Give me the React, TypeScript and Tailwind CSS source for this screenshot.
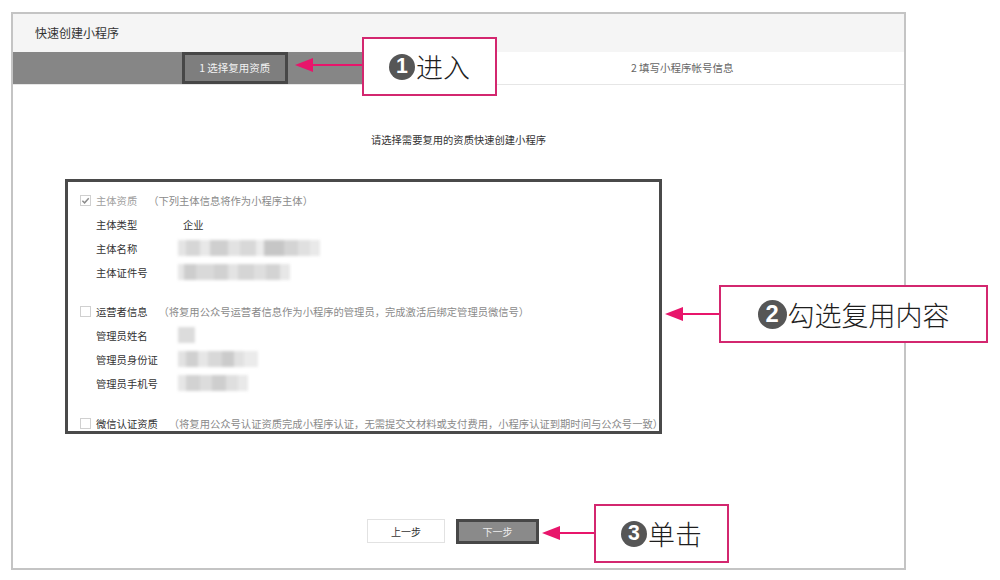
import React from 'react';

const FONT = { fontFamily: '"Noto Sans CJK SC", "Liberation Sans", sans-serif' };

type Cell = [number, string];

const nameBlur: Cell[] = [
  [8, '#e4e4e4'], [14, '#d6d6d6'], [10, '#e8e8e8'], [18, '#cfcfcf'], [12, '#e2e2e2'],
  [16, '#d8d8d8'], [8, '#ececec'], [20, '#c6c6c6'], [14, '#d4d4d4'], [12, '#e0e0e0'], [10, '#e9e9e9'],
];
const idBlur: Cell[] = [
  [6, '#e6e6e6'], [12, '#cdcdcd'], [18, '#d9d9d9'], [14, '#d1d1d1'], [10, '#e3e3e3'],
  [16, '#d5d5d5'], [12, '#dedede'], [14, '#d3d3d3'], [10, '#e7e7e7'],
];
const adminName: Cell[] = [[17, '#dcdcdc']];
const adminId: Cell[] = [
  [8, '#e2e2e2'], [12, '#d0d0d0'], [10, '#e6e6e6'], [14, '#d8d8d8'], [12, '#cbcbcb'], [10, '#e1e1e1'], [14, '#ebebeb'],
];
const adminPhone: Cell[] = [
  [8, '#e6e6e6'], [14, '#d2d2d2'], [12, '#dcdcdc'], [14, '#cecece'], [12, '#dfdfdf'], [10, '#e9e9e9'],
];

const Blur = ({ cells }: { cells: Cell[] }) => (
  <div className="flex h-[16px] blur-[1.5px]">
    {cells.map(([w, c], i) => (
      <div key={i} className="h-full" style={{ width: w, background: c }} />
    ))}
  </div>
);

const Checkbox = ({ checked }: { checked?: boolean }) => (
  <span className="mr-[5px] flex h-[11px] w-[11px] shrink-0 items-center justify-center border border-[#d0d0d0] bg-white">
    {checked && (
      <svg width="9" height="9" viewBox="0 0 10 10">
        <path d="M1.5 5.2 L4 7.6 L8.6 2.4" stroke="#8c8c8c" strokeWidth="1.6" fill="none" />
      </svg>
    )}
  </span>
);

const Row = ({ label, children }: { label: string; children?: React.ReactNode }) => (
  <div className="flex h-[24px] items-center pl-[28px]">
    <span className="w-[82px] text-[#333]">{label}</span>
    {children}
  </div>
);

const Heading = ({ checked, title, desc, muted }: { checked?: boolean; title: string; desc: string; muted?: boolean }) => (
  <div className="flex h-[24px] items-center whitespace-nowrap pl-[12px]">
    <Checkbox checked={checked} />
    <span className={muted ? 'text-[#a0a0a0]' : 'text-[#333]'}>{title}</span>
    <span className="ml-[11px] text-[#8a8a8a]">{desc}</span>
  </div>
);

const Badge = ({ n, size = 26 }: { n: string; size?: number }) => (
  <span
    className="mr-[1px] inline-flex items-center justify-center rounded-full bg-[#565656] font-bold text-white"
    style={{ width: size, height: size, fontSize: size * 0.82, fontFamily: '"Liberation Sans", sans-serif' }}
  >
    {n}
  </span>
);

const Callout = ({ className, n, text, size }: { className: string; n: string; text: string; size?: number }) => (
  <div className={`absolute flex items-center justify-center border-2 border-[#d3276f] bg-white ${className}`}>
    <Badge n={n} size={size} />
    <span className="text-[27px] font-light leading-none text-[#1e1e1e]">{text}</span>
  </div>
);

const Arrow = ({ className, width }: { className: string; width: number }) => (
  <svg className={`absolute ${className}`} width={width} height="16" viewBox={`0 0 ${width} 16`}>
    <path d={`M0 8 L18 1 L18 15 Z`} fill="#e8156b" />
    <rect x="16" y="7" width={width - 16} height="2" fill="#e8156b" />
  </svg>
);

export default function App() {
  return (
    <div className="relative h-[580px] w-[1000px] overflow-hidden bg-white pl-[11px] pt-[12px]" style={FONT}>
      <div className="flex h-[558px] w-[895px] flex-col border-2 border-[#c4c4c4]">
        <div className="flex h-[38px] items-center bg-[#f5f5f5] pl-[22px] text-[12px] text-[#333]">
          快速创建小程序
        </div>
        <div className="flex h-[33px] border-b border-[#e6e6e6] text-[10.5px]">
          <div className="flex flex-1 items-center justify-center bg-[#868686]">
            <div className="flex h-[32px] w-[106px] items-center justify-center border-[3px] border-[#474747] bg-[#7e7e7e] text-[#f2f2f2]">
              1 选择复用资质
            </div>
          </div>
          <div className="flex flex-1 items-center justify-center pl-[4px] text-[#666]">2 填写小程序帐号信息</div>
        </div>

        <div className="mt-[47px] text-center text-[10.3px] text-[#333]">请选择需要复用的资质快速创建小程序</div>

        <div className="ml-[52px] mt-[32px] h-[255px] w-[597px] border-[3px] border-[#4a4a4a] pt-[6px] text-[10.3px]">
          <Heading checked muted title="主体资质" desc="（下列主体信息将作为小程序主体）" />
          <Row label="主体类型">
            <span className="ml-[5px] text-[#333]">企业</span>
          </Row>
          <Row label="主体名称">
            <Blur cells={nameBlur} />
          </Row>
          <Row label="主体证件号">
            <Blur cells={idBlur} />
          </Row>

          <div className="mt-[15px]">
            <Heading title="运营者信息" desc="（将复用公众号运营者信息作为小程序的管理员，完成激活后绑定管理员微信号）" />
            <Row label="管理员姓名">
              <Blur cells={adminName} />
            </Row>
            <Row label="管理员身份证">
              <Blur cells={adminId} />
            </Row>
            <Row label="管理员手机号">
              <Blur cells={adminPhone} />
            </Row>
          </div>

          <div className="mt-[16px]">
            <Heading
              title="微信认证资质"
              desc="（将复用公众号认证资质完成小程序认证，无需提交文材料或支付费用，小程序认证到期时间与公众号一致）"
            />
          </div>
        </div>

        <div className="mt-[85px] flex gap-[11px] pl-[354px] text-[10px]">
          <button className="flex h-[24px] w-[78px] items-center justify-center border border-[#e2e2e2] bg-white text-[#333]">
            上一步
          </button>
          <button className="flex h-[25px] w-[83px] items-center justify-center border-[3px] border-[#474747] bg-[#8a8a8a] text-[#eee]">
            下一步
          </button>
        </div>
      </div>

      <Arrow className="left-[295px] top-[57px]" width={68} />
      <Callout className="left-[362px] top-[37px] h-[59px] w-[135px]" n="1" text="进入" />

      <Arrow className="left-[665px] top-[306px]" width={55} />
      <Callout className="left-[719px] top-[285px] h-[58px] w-[269px]" n="2" text="勾选复用内容" size={29} />

      <Arrow className="left-[542px] top-[525px]" width={53} />
      <Callout className="left-[594px] top-[504px] h-[59px] w-[135px]" n="3" text="单击" />
    </div>
  );
}
